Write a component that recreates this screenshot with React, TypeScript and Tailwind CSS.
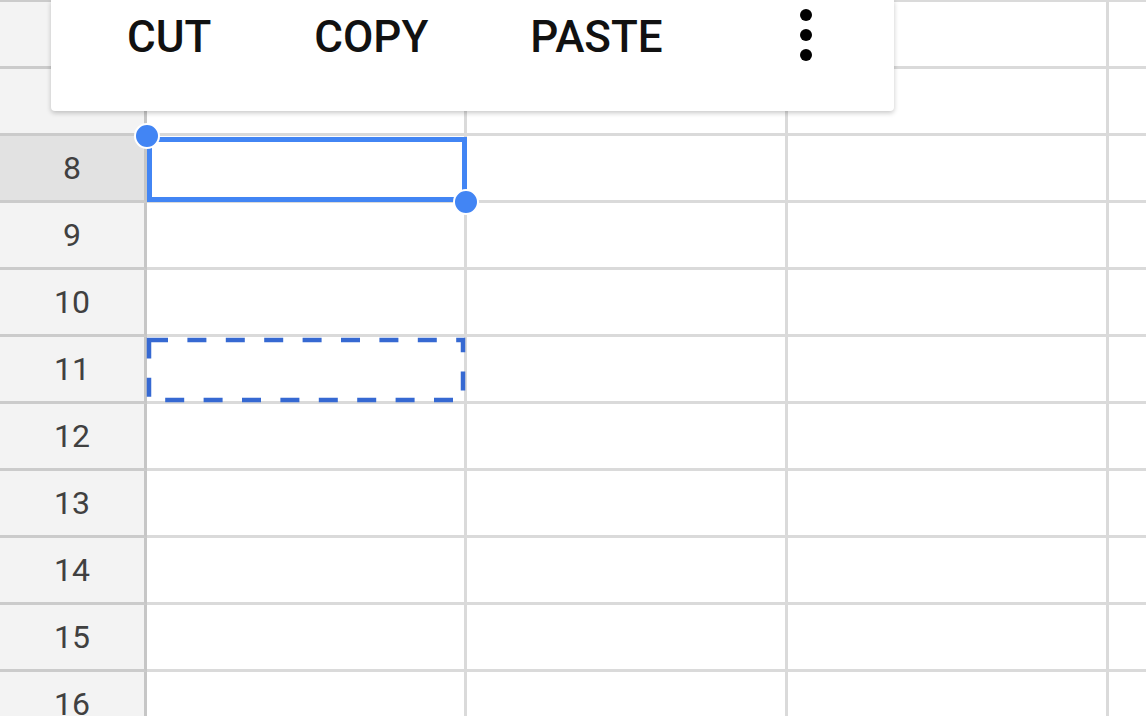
import React from "react";

const rows: { label: string; h: string; selected?: boolean; top?: boolean }[] = [
  { label: "", h: "h-[69px]", top: true },
  { label: "", h: "h-[67px]" },
  { label: "8", h: "h-[67px]", selected: true },
  { label: "9", h: "h-[67px]" },
  { label: "10", h: "h-[67px]" },
  { label: "11", h: "h-[67px]" },
  { label: "12", h: "h-[67px]" },
  { label: "13", h: "h-[67px]" },
  { label: "14", h: "h-[67px]" },
  { label: "15", h: "h-[67px]" },
  { label: "16", h: "h-[67px]" },
];

function Row({ label, h, selected, top }: { label: string; h: string; selected?: boolean; top?: boolean }) {
  const t = top ? "border-t-[2px]" : "";
  return (
    <div className={`flex shrink-0 ${h}`}>
      <div
        className={`w-[147px] shrink-0 border-r-[3px] border-r-[#c6c6c6] border-b-[3px] border-b-[#cbcbcb] border-t-[#cbcbcb] ${t} flex items-center justify-center text-[32px] leading-none text-[#404040] ${
          selected ? "bg-[#e2e2e2]" : "bg-[#f3f3f3]"
        }`}
      >
        {label}
      </div>
      <div className={`w-[320px] shrink-0 border-r-[3px] border-b-[3px] border-[#dadada] ${t}`} />
      <div className={`w-[321px] shrink-0 border-r-[3px] border-b-[3px] border-[#dadada] ${t}`} />
      <div className={`w-[321px] shrink-0 border-r-[3px] border-b-[3px] border-[#dadada] ${t}`} />
      <div className={`flex-1 border-b-[3px] border-[#dadada] ${t}`} />
    </div>
  );
}

export default function App() {
  return (
    <div className="relative w-[1146px] h-[716px] overflow-hidden bg-white font-['Roboto',sans-serif]">
      <div className="flex flex-col">
        {rows.map((r, i) => (
          <Row key={i} {...r} />
        ))}
      </div>

      {/* Copy-selection marching ants */}
      <svg
        className="absolute left-[145px] top-[336px]"
        width="322"
        height="68"
        viewBox="0 0 322 68"
      >
        <rect
          x="4"
          y="4"
          width="314"
          height="60"
          fill="none"
          stroke="#3669d2"
          strokeWidth="4.5"
          strokeDasharray="19 19.4"
        />
      </svg>

      {/* Selected cell */}
      <div className="absolute left-[147px] top-[137px] w-[320px] h-[65px] border-[5px] border-[#4285f4]" />
      <div className="absolute left-[134px] top-[123px] w-[26px] h-[26px] rounded-full bg-[#4285f4] border-2 border-white" />
      <div className="absolute left-[453px] top-[189px] w-[26px] h-[26px] rounded-full bg-[#4285f4] border-2 border-white" />

      {/* Context toolbar */}
      <div className="absolute left-[51px] top-0 w-[843px] h-[111px] bg-white rounded-b-[4px] shadow-[0_2px_5px_rgba(0,0,0,0.22)]">
        <div className="flex items-start pl-[76px] pt-[15px] text-[44px] leading-none font-medium text-[#111111]">
          <span>CUT</span>
          <span className="ml-[103px]">COPY</span>
          <span className="ml-[102px]">PASTE</span>
          <div className="ml-auto mr-[82px] -mt-[6px] flex flex-col gap-[8px]">
            <span className="block w-[12px] h-[12px] rounded-full bg-black" />
            <span className="block w-[12px] h-[12px] rounded-full bg-black" />
            <span className="block w-[12px] h-[12px] rounded-full bg-black" />
          </div>
        </div>
      </div>
    </div>
  );
}
